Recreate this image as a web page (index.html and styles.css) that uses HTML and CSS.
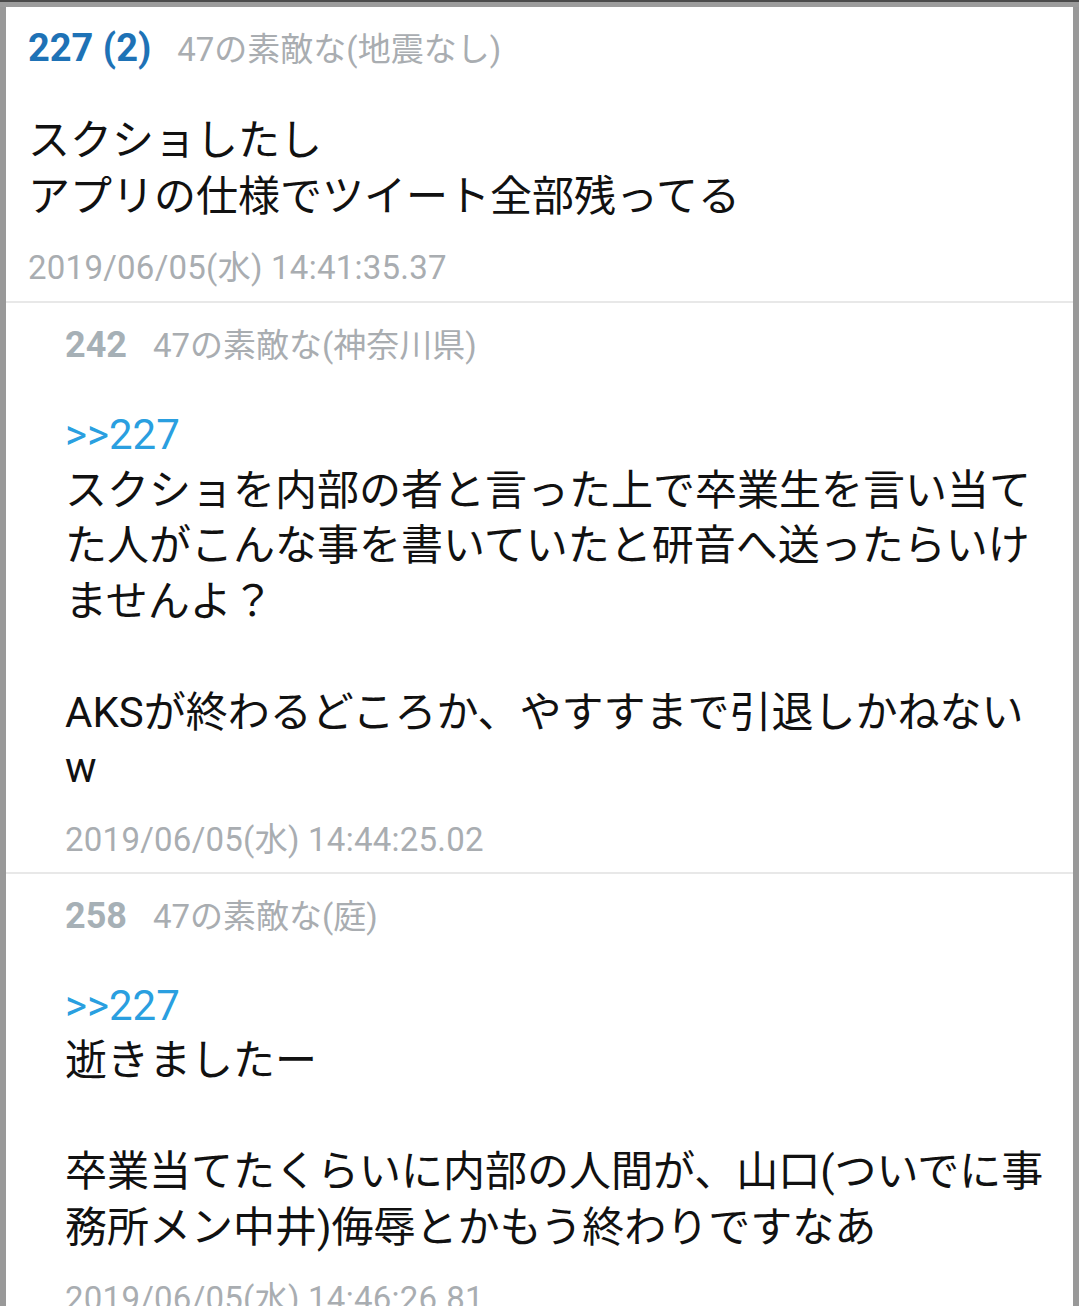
FILE: index.html
```html
<!DOCTYPE html>
<html lang="ja">
<head>
<meta charset="utf-8">
<link rel="stylesheet" href="styles.css">
</head>
<body>
<div class="topbar"></div>
<div class="frame">
  <div class="post first">
    <div class="head"><span class="num op">227 (2)</span><span class="name">47の素敵な(地震なし)</span></div>
    <div class="body">スクショしたし<br>アプリの仕様でツイート全部残ってる</div>
    <div class="date">2019/06/05(水) 14:41:35.37</div>
  </div>
  <div class="post reply">
    <div class="head"><span class="num">242</span><span class="name">47の素敵な(神奈川県)</span></div>
    <div class="body"><span class="anchor">&gt;&gt;227</span><br>スクショを内部の者と言った上で卒業生を言い当て<br>た人がこんな事を書いていたと研音へ送ったらいけ<br>ませんよ？<br><br>AKSが終わるどころか、やすすまで引退しかねない<br>w</div>
    <div class="date">2019/06/05(水) 14:44:25.02</div>
  </div>
  <div class="post reply">
    <div class="head"><span class="num">258</span><span class="name">47の素敵な(庭)</span></div>
    <div class="body"><span class="anchor">&gt;&gt;227</span><br>逝きましたー<br><br>卒業当てたくらいに内部の人間が、山口(ついでに事<br>務所メン中井)侮辱とかもう終わりですなあ</div>
    <div class="date">2019/06/05(水) 14:46:26.81</div>
  </div>
</div>
</body>
</html>
```
FILE: styles.css
```css
html, body {
  margin: 0;
  padding: 0;
  background: #ffffff;
}
body {
  font-family: Roboto, "Noto Sans CJK JP", sans-serif;
  overflow: hidden;
  height: 1306px;
}
.topbar {
  height: 5px;
  border-top: 2px solid #4a4a4a;
  background: #9c9c9c;
}
.frame {
  border-left: 6px solid #999999;
  border-right: 6px solid #999999;
  min-height: 1299px;
  box-sizing: border-box;
}
.post {
  padding: 18px 0 8px 22px;
  border-bottom: 2px solid #e8e8e8;
}
.post.first {
  padding-top: 17px;
  padding-bottom: 9px;
}
.post.first .body {
  margin-top: 41px;
}
.post.reply {
  padding-left: 59px;
}
.head {
  display: flex;
  align-items: baseline;
  gap: 26px;
  height: 48px;
  line-height: 48px;
}
.num {
  font-weight: 700;
  font-size: 36px;
  color: #a6b0b6;
}
.num.op {
  font-size: 38px;
  color: #1e72b6;
}
.name {
  font-size: 33px;
  color: #a9adb1;
}
.body {
  margin-top: 38px;
  font-size: 42px;
  line-height: 55.5px;
  color: #111111;
  white-space: nowrap;
}
.anchor {
  color: #2a9fe0;
}
.date {
  margin-top: 20px;
  font-size: 33px;
  letter-spacing: 0.25px;
  line-height: 48px;
  color: #a9adb1;
}
```
